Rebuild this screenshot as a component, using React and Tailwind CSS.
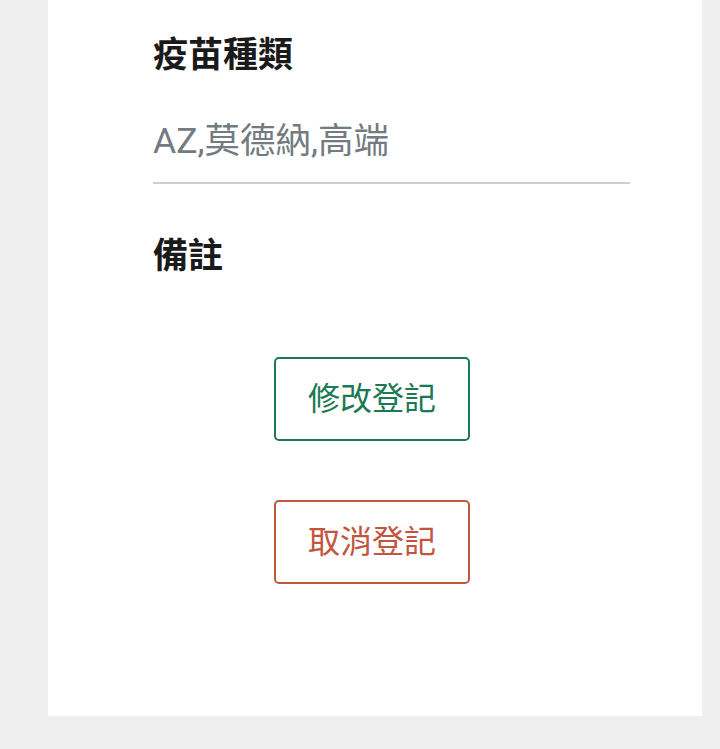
export default function App() {
  const font = { fontFamily: 'Roboto, "Noto Sans CJK TC", "Noto Sans", sans-serif' }

  return (
    <div className="min-h-[749px] bg-[#efefef]" style={font}>
      <div className="ml-[48px] w-[654px] h-[716px] bg-white pl-[105px] pr-[72px] pt-[32px]">
        {/* Vaccine type */}
        <div className="text-[35px] font-bold leading-[48px] text-[#1a1a1a]">疫苗種類</div>
        <div className="mt-[37px] text-[35.5px] leading-[48px] text-[#737a80]">AZ,莫德納,高端</div>
        <div className="mt-[17px] h-[2px] bg-[#cfcfcf]" />

        {/* Remarks */}
        <div className="mt-[49px] text-[35px] font-bold leading-[48px] text-[#1a1a1a]">備註</div>

        <div className="mt-[76px] flex flex-col items-start pl-[121px] gap-[59px]">
          <button className="w-[196px] h-[84px] border-2 border-[#1b7a55] rounded-[5px] text-[32px] text-[#1b7a55]">
            修改登記
          </button>
          <button className="w-[196px] h-[84px] border-2 border-[#c2553d] rounded-[5px] text-[32px] text-[#c2553d]">
            取消登記
          </button>
        </div>
      </div>
    </div>
  )
}
